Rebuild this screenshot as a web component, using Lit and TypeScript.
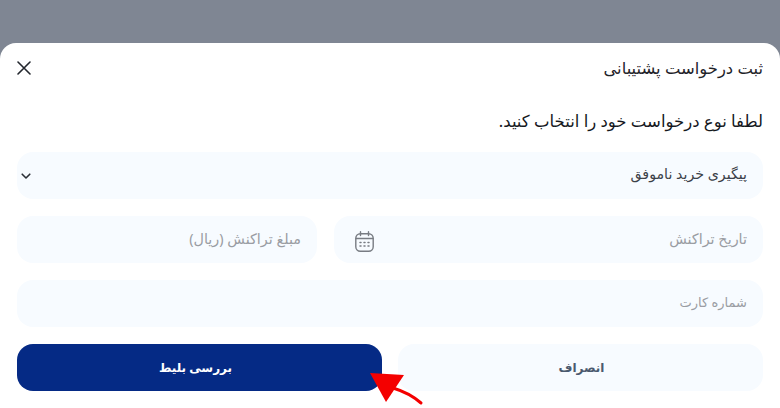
import { LitElement, html, css } from "lit";
import { customElement } from "lit/decorators.js";

@customElement("app-root")
export class AppRoot extends LitElement {
  static styles = css`
    :host {
      display: block;
      position: relative;
      width: 780px;
      height: 408px;
      overflow: hidden;
      background: #7f8693;
      font-family: "Noto Sans", "DejaVu Sans", sans-serif;
    }
    .sheet {
      box-sizing: border-box;
      height: 365px;
      margin-top: 43px;
      background: #fff;
      border-radius: 16px 16px 0 0;
      padding: 0 17px;
      display: flex;
      flex-direction: column;
    }
    .head {
      height: 49px;
      display: flex;
      align-items: center;
      justify-content: space-between;
      font-size: 16.4px;
      color: #1f2329;
    }
    .prompt {
      margin-top: 17px;
      height: 24px;
      line-height: 24px;
      font-size: 16.5px;
      color: #15181d;
    }
    .form {
      margin-top: 19px;
      display: flex;
      flex-direction: column;
      gap: 17px;
    }
    .row {
      display: grid;
      grid-template-columns: 429px 300px;
      gap: 17px;
    }
    .field {
      height: 47px;
      box-sizing: border-box;
      background: #f7fbff;
      border-radius: 16px;
      padding: 0 16px;
      display: flex;
      align-items: center;
      justify-content: space-between;
      font-size: 14.4px;
      color: #9a9da3;
    }
    .field span {
      margin-top: -3px;
    }
    .field.date {
      padding-left: 21px;
    }
    .field.date svg {
      margin-top: 4px;
    }
    .field.card {
      font-size: 13px;
    }
    .field.filled {
      color: #3b4048;
      padding-left: 3px;
      font-size: 14.2px;
    }
    .field.filled span {
      margin-top: -4px;
    }
    .actions {
      display: grid;
      grid-template-columns: 365px 365px;
      gap: 16px;
    }
    .btn {
      height: 47px;
      border: 0;
      border-radius: 16px;
      font: inherit;
      font-size: 12px;
      font-weight: 700;
      padding: 0;
    }
    .cancel {
      background: #f7fbff;
      color: #4b5a6e;
      padding-left: 2px;
    }
    .submit {
      background: #052a85;
      color: #fff;
      padding-right: 8px;
    }
    svg {
      display: block;
    }
    .pointer {
      position: absolute;
      left: 0;
      top: 0;
      pointer-events: none;
    }
  `;

  render() {
    return html`
      <div class="sheet" dir="rtl">
        <div class="head">
          <span>ثبت درخواست پشتیبانی</span>
          <svg width="14" height="14" viewBox="0 0 14 14" fill="none" stroke="#23272e" stroke-width="1.6" stroke-linecap="round">
            <path d="M1 1 13 13M13 1 1 13" />
          </svg>
        </div>
        <div class="prompt">لطفا نوع درخواست خود را انتخاب کنید.</div>
        <div class="form">
          <div class="field filled">
            <span>پیگیری خرید ناموفق</span>
            <svg width="12" height="12" viewBox="0 0 12 12" fill="none" stroke="#2b2f36" stroke-width="1.6" stroke-linecap="round" stroke-linejoin="round">
              <path d="M2.2 4.2 6 8 9.8 4.2" />
            </svg>
          </div>
          <div class="row">
            <div class="field date">
              <span>تاریخ تراکنش</span>
              <svg width="19" height="21" viewBox="0 0 19 21" fill="none" stroke="#787c83" stroke-width="1.4" stroke-linecap="round">
                <rect x="0.8" y="2.8" width="17.4" height="17.4" rx="4.5" />
                <path d="M1 7.5H18M5.5 0.8V4.5M13.5 0.8V4.5" />
                <path stroke-width="1.5" d="M5 11.5H6M9 11.5H10M13 11.5H14M5 15H6M9 15H10M13 15H14" />
              </svg>
            </div>
            <div class="field"><span>مبلغ تراکنش (ریال)</span></div>
          </div>
          <div class="field card"><span>شماره کارت</span></div>
          <div class="actions">
            <button class="btn cancel">انصراف</button>
            <button class="btn submit">بررسی بلیط</button>
          </div>
        </div>
      </div>
      <svg class="pointer" width="780" height="408" viewBox="0 0 780 408" fill="none">
        <path d="M370 373 404 375 386 402Z" fill="#f40000" />
        <path d="M393 388C403 391 413 396 421 403" stroke="#f40000" stroke-width="3" stroke-linecap="round" />
      </svg>
    `;
  }
}
